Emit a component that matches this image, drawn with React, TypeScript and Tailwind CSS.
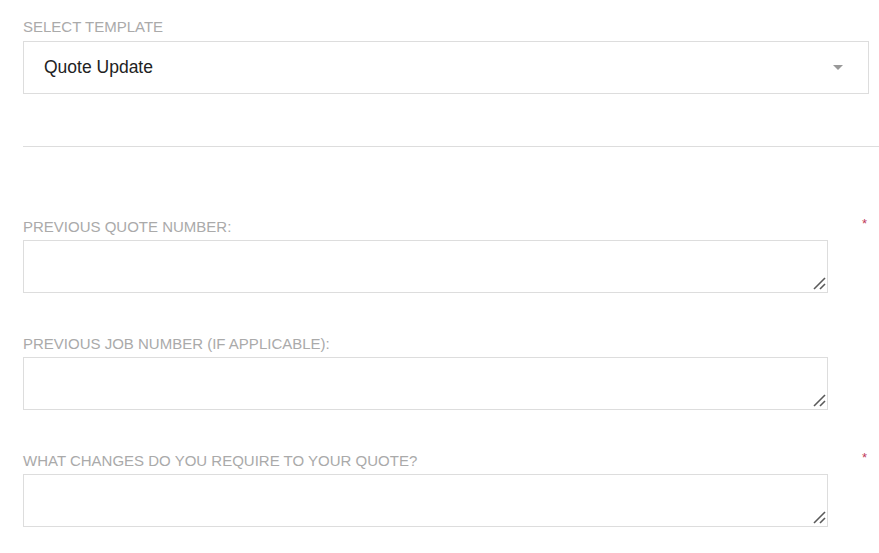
const fields = [
  { label: "PREVIOUS QUOTE NUMBER:", required: true },
  { label: "PREVIOUS JOB NUMBER (IF APPLICABLE):", required: false },
  { label: "WHAT CHANGES DO YOU REQUIRE TO YOUR QUOTE?", required: true },
]

const Grip = () => (
  <svg className="pointer-events-none absolute bottom-[3px] right-[2px]" width="13" height="13" viewBox="0 0 13 13">
    <line x1="1" y1="12" x2="12" y2="1" stroke="#5a5a5a" strokeWidth="1.6" />
    <line x1="7" y1="12" x2="12" y2="7" stroke="#5a5a5a" strokeWidth="1.6" />
  </svg>
)

const App = () => {
  return (
    <div className="min-h-screen bg-white pl-[23px] pt-[19px] font-['Liberation_Sans',Arial,sans-serif]">
      <div className="text-[15px] leading-[16px] text-[#aaaaaa]">SELECT TEMPLATE</div>
      <div className="mt-[6px] flex h-[53px] w-[846px] items-center justify-between border border-[#dddddd] pl-[20px] pr-[25px]">
        <span className="text-[17.5px] text-[#222222]">Quote Update</span>
        <span className="h-0 w-0 border-x-[5px] border-t-[5px] border-x-transparent border-t-[#999999]"></span>
      </div>

      <div className="mt-[52px] border-t border-[#dddddd]"></div>

      <div className="mt-[72px] flex flex-col gap-[43px]">
        {fields.map((f) => (
          <div key={f.label} className="relative">
            <div className="text-[15px] leading-[16px] text-[#aaaaaa]">{f.label}</div>
            <div className="relative mt-[5px] w-[805px]">
              <textarea className="block h-[53px] w-full resize-none border border-[#dddddd] outline-none"></textarea>
              <Grip />
            </div>
            {f.required && (
              <span className="absolute left-[839px] top-[-5px] text-[13px] text-[#c0395a]">*</span>
            )}
          </div>
        ))}
      </div>
    </div>
  )
}

export default App
